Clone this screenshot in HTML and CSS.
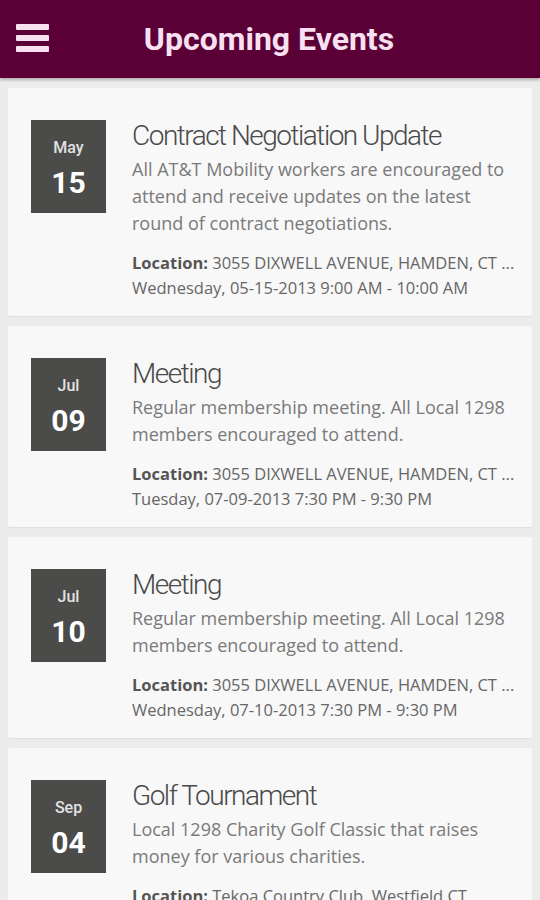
FILE: index.html
```html
<!DOCTYPE html>
<html lang="en">
<head>
    <meta charset="UTF-8">
    <meta name="viewport" content="width=device-width, initial-scale=1.0">
    <title>Upcoming Events</title>
    <link rel="stylesheet" href="styles.css">
</head>
<body>

<div class="topbar">
    <div class="menu">
        <span></span>
        <span></span>
        <span></span>
    </div>
    <h1 class="topbar-title">Upcoming Events</h1>
</div>

<div class="events">
    <div class="event">
        <div class="date">
            <div class="month">May</div>
            <div class="day">15</div>
        </div>
        <div class="info">
            <div class="title">Contract Negotiation Update</div>
            <div class="desc">All AT&amp;T Mobility workers are encouraged to attend and receive updates on the latest round of contract negotiations.</div>
            <div class="meta">
                <div class="location"><b>Location:</b> 3055 DIXWELL AVENUE, HAMDEN, CT ...</div>
                <div class="when">Wednesday, 05-15-2013 9:00 AM - 10:00 AM</div>
            </div>
        </div>
    </div>

    <div class="event">
        <div class="date">
            <div class="month">Jul</div>
            <div class="day">09</div>
        </div>
        <div class="info">
            <div class="title">Meeting</div>
            <div class="desc">Regular membership meeting. All Local 1298 members encouraged to attend.</div>
            <div class="meta">
                <div class="location"><b>Location:</b> 3055 DIXWELL AVENUE, HAMDEN, CT ...</div>
                <div class="when">Tuesday, 07-09-2013 7:30 PM - 9:30 PM</div>
            </div>
        </div>
    </div>

    <div class="event">
        <div class="date">
            <div class="month">Jul</div>
            <div class="day">10</div>
        </div>
        <div class="info">
            <div class="title">Meeting</div>
            <div class="desc">Regular membership meeting. All Local 1298 members encouraged to attend.</div>
            <div class="meta">
                <div class="location"><b>Location:</b> 3055 DIXWELL AVENUE, HAMDEN, CT ...</div>
                <div class="when">Wednesday, 07-10-2013 7:30 PM - 9:30 PM</div>
            </div>
        </div>
    </div>

    <div class="event">
        <div class="date">
            <div class="month">Sep</div>
            <div class="day">04</div>
        </div>
        <div class="info">
            <div class="title">Golf Tournament</div>
            <div class="desc">Local 1298 Charity Golf Classic that raises money for various charities.</div>
            <div class="meta">
                <div class="location"><b>Location:</b> Tekoa Country Club, Westfield CT</div>
                <div class="when">Wednesday, 09-04-2013 8:00 AM - 4:00 PM</div>
            </div>
        </div>
    </div>
</div>

</body>
</html>
```

FILE: styles.css
```css
body {
    margin: 0;
    background-color: #ececec;
    font-family: Roboto, "Liberation Sans", sans-serif;
    color: #555;
}

/* barra do topo */
.topbar {
    height: 78px;
    background-color: #5a0037;
    display: flex;
    align-items: center;
    justify-content: center;
    position: relative;
    box-shadow: 0 2px 3px rgba(0, 0, 0, 0.25);
}

.menu {
    position: absolute;
    left: 16px;
    top: 24px;
    width: 33px;
    display: flex;
    flex-direction: column;
    gap: 5px;
}

.menu span {
    display: block;
    height: 6px;
    border-radius: 1px;
    background-color: #f7e0f0;
}

.topbar-title {
    margin: 0;
    font-size: 32px;
    font-weight: bold;
    color: #f7e0f0;
    padding-right: 2px;
}

/* lista de eventos */
.events {
    padding: 10px 8px;
    display: flex;
    flex-direction: column;
    gap: 10px;
}

.event {
    display: flex;
    gap: 26px;
    padding: 32px 16px 16px 23px;
    background-color: #f8f8f8;
    border-radius: 2px;
    box-shadow: 0 1px 1px rgba(0, 0, 0, 0.06);
}

.date {
    flex: none;
    width: 75px;
    height: 93px;
    box-sizing: border-box;
    padding-top: 18px;
    background-color: #4b4c4a;
    text-align: center;
}

.month {
    font-size: 16px;
    line-height: 20px;
    font-weight: 500;
    color: #e2e2e2;
}

.day {
    margin-top: 8px;
    font-size: 30px;
    line-height: 34px;
    font-weight: bold;
    color: #fff;
}

.info {
    flex: 1;
    min-width: 0;
}

.title {
    font-size: 28px;
    line-height: 32px;
    font-weight: 300;
    letter-spacing: -1.5px;
    color: #4a4a4a;
}

.desc {
    margin-top: 4px;
    font-family: "Open Sans", Roboto, sans-serif;
    font-size: 18px;
    line-height: 27px;
    color: #7a7a7a;
}

.meta {
    margin-top: 13px;
    font-family: "Open Sans", Roboto, sans-serif;
    font-size: 16.5px;
    line-height: 25px;
    color: #666;
    white-space: nowrap;
}

.location b {
    color: #555;
}
```
